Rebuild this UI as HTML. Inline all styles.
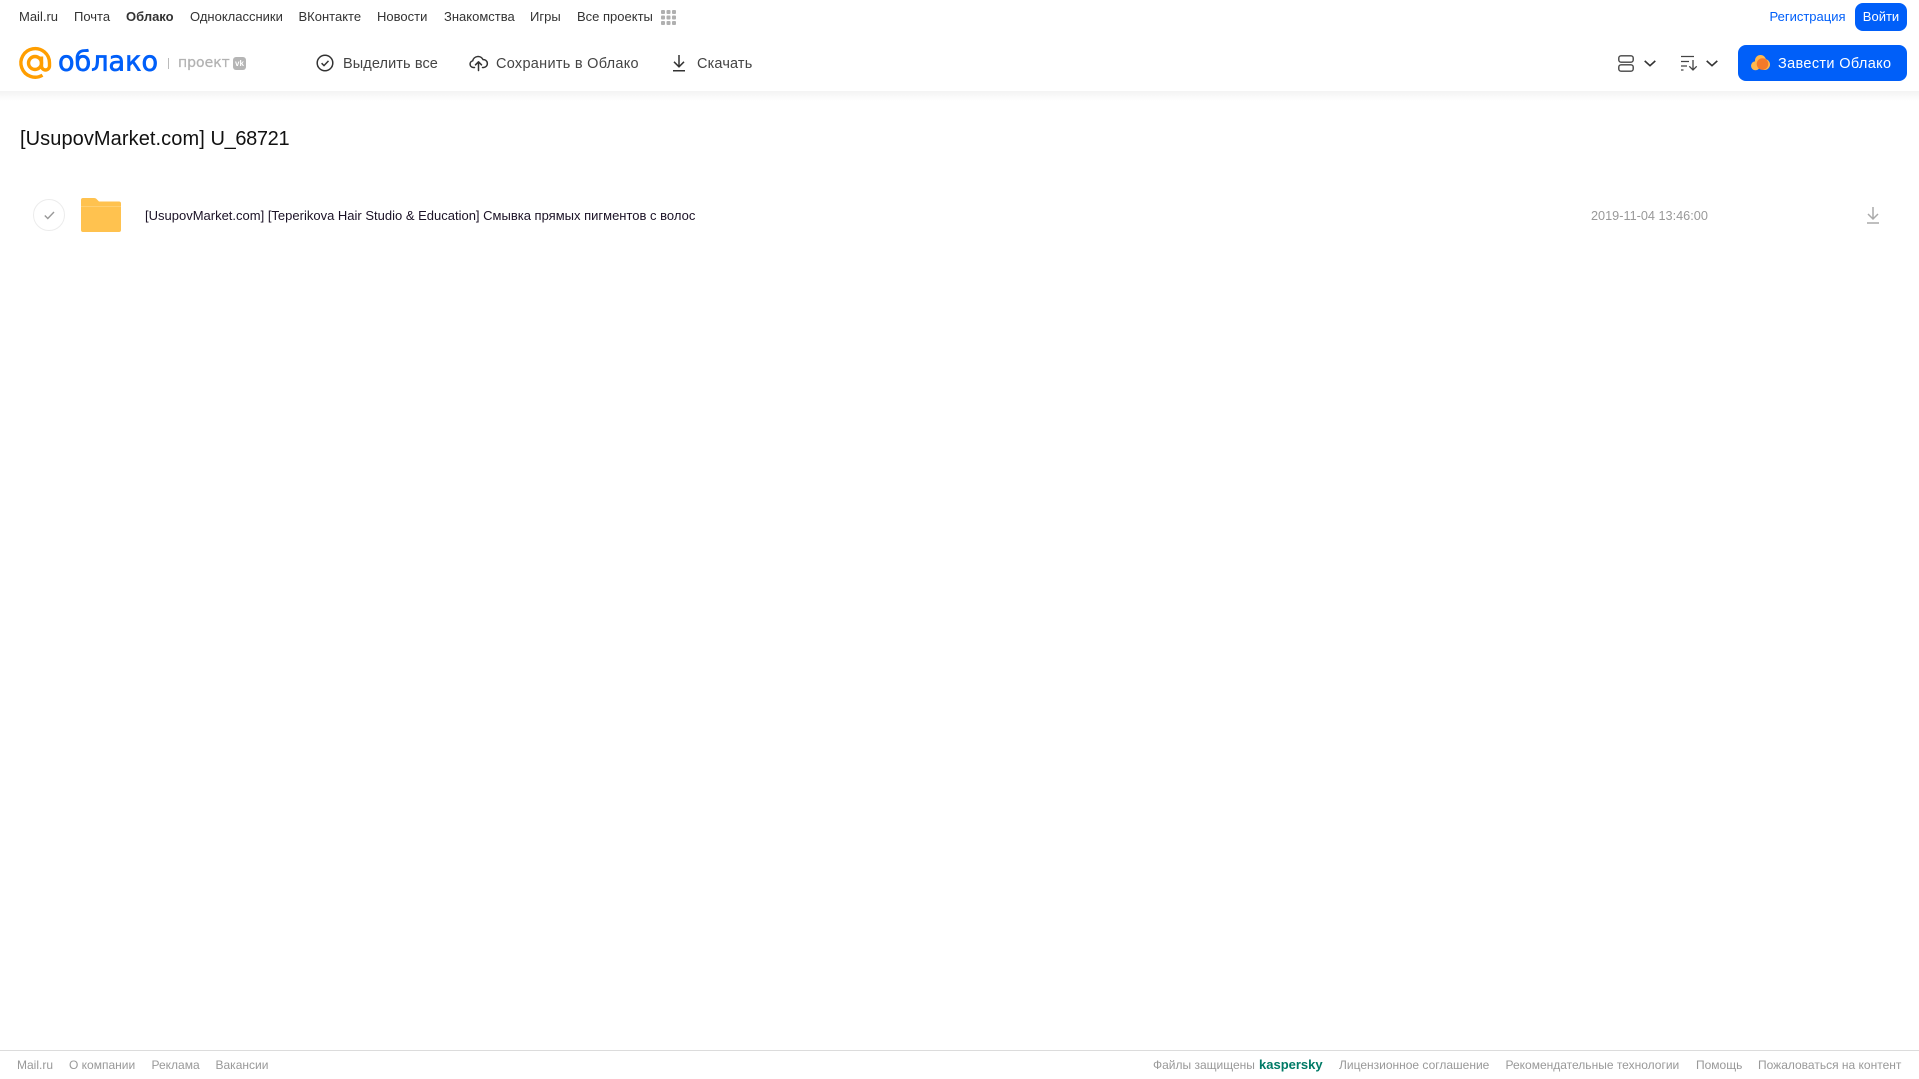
<!DOCTYPE html>
<html lang="ru"><head><meta charset="utf-8"><title>Облако</title>
<style>
html,body{margin:0;padding:0;background:#fff}
body{width:1919px;height:1079px;position:relative;overflow:hidden;font-family:"Liberation Sans",Arial,sans-serif}
.t{position:absolute;white-space:nowrap;line-height:20px}
.n{top:7px;font-size:13px;color:#333}
.b{top:53.500px;font-size:14.500px;color:#444}
.f{top:1055px;font-size:12px;color:#999}
svg{position:absolute;overflow:visible}
</style></head><body>
<div style="position:absolute;left:0;top:91px;width:1919px;height:10px;background:linear-gradient(#f3f3f3,#fff)"></div>

<span class="t n" style="left:19px">Mail.ru</span>
<span class="t n" style="left:74px">Почта</span>
<span class="t n" style="left:126px;font-weight:bold">Облако</span>
<span class="t n" style="left:190px">Одноклассники</span>
<span class="t n" style="left:298.500px">ВКонтакте</span>
<span class="t n" style="left:377px">Новости</span>
<span class="t n" style="left:444px">Знакомства</span>
<span class="t n" style="left:530px">Игры</span>
<span class="t n" style="left:577px">Все проекты</span>
<svg style="left:661px;top:10px" width="15" height="15" fill="#b0b0b0">
<rect x="0" y="0" width="4" height="4" rx="1"/><rect x="5.500" y="0" width="4" height="4" rx="1"/><rect x="11" y="0" width="4" height="4" rx="1"/>
<rect x="0" y="5.500" width="4" height="4" rx="1"/><rect x="5.500" y="5.500" width="4" height="4" rx="1"/><rect x="11" y="5.500" width="4" height="4" rx="1"/>
<rect x="0" y="11" width="4" height="4" rx="1"/><rect x="5.500" y="11" width="4" height="4" rx="1"/><rect x="11" y="11" width="4" height="4" rx="1"/></svg>

<span class="t n" style="left:1769.500px;color:#005ff9">Регистрация</span>
<div style="position:absolute;left:1855px;top:3px;width:52px;height:28px;border-radius:8px;background:#005ff9;color:#fff;font-size:13px;line-height:28px;text-align:center">Войти</div>

<svg style="left:19px;top:47px" width="33" height="33" viewBox="0 0 33 33" fill="none" stroke="#ff9e00" stroke-width="3.400"><circle cx="16" cy="16" r="6.500"/><path d="M22.500 9.500V19a4 4 0 0 0 8 0V16A14.300 14.300 0 1 0 23.500 28.200"/></svg>
<svg style="left:56px;top:42px" width="106" height="40"><text x="2" y="28.500" font-family="'DejaVu Sans',sans-serif" font-size="28" fill="#005ff9" stroke="#005ff9" stroke-width=".7" textLength="100" lengthAdjust="spacingAndGlyphs">облако</text></svg>
<div style="position:absolute;left:168px;top:58px;width:1px;height:11px;background:#bbb"></div>
<span class="t" style="left:178px;top:53px;font-family:'DejaVu Sans',sans-serif;font-size:14px;color:#b2b2b2;-webkit-text-stroke:.25px #b2b2b2">проект</span>
<div style="position:absolute;left:233px;top:57px;width:13px;height:13px;border-radius:3px;background:#b5b5b5;color:#fff;font-size:8px;font-weight:bold;line-height:13px;text-align:center">vk</div>

<svg style="left:316px;top:54px" width="18" height="18" viewBox="0 0 18 18" fill="none" stroke="#333" stroke-width="1.500"><circle cx="9" cy="9" r="7.800"/><path d="M5.600 9.200l2.400 2.400 4.500-4.700"/></svg>
<span class="t b" style="left:343px;letter-spacing:.1px">Выделить все</span>
<svg style="left:469px;top:54px" width="19" height="17" viewBox="0 0 19 17" fill="none" stroke="#333" stroke-width="1.500" stroke-linecap="round" stroke-linejoin="round"><path d="M5.500 13.500H4.200A3.400 3.400 0 0 1 3.700 6.800 5.500 5.500 0 0 1 14 5.600a3.900 3.900 0 0 1 .8 7.900H13.500"/><path d="M9.500 16.500V8M6.500 10.800l3-3 3 3"/></svg>
<span class="t b" style="left:496px;letter-spacing:.28px">Сохранить в Облако</span>
<svg style="left:672px;top:54px" width="14" height="18" viewBox="0 0 14 18" fill="none" stroke="#333" stroke-width="1.500"><path d="M7 1v11.500M2 7.800l5 5 5-5M1 16.800h12"/></svg>
<span class="t b" style="left:697px;letter-spacing:.15px">Скачать</span>

<svg style="left:1618px;top:55px" width="16" height="17" fill="none" stroke="#444" stroke-width="1.400"><rect x=".8" y=".8" width="14.400" height="6.400" rx="2.200"/><rect x=".8" y="9.800" width="14.400" height="6.400" rx="2.200"/></svg>
<svg style="left:1644px;top:60px" width="12" height="7" fill="none" stroke="#333" stroke-width="1.600"><path d="M.7.900L6 5.700 11.300.9"/></svg>
<svg style="left:1681px;top:55px" width="17" height="16" fill="none" stroke="#444" stroke-width="1.300"><path d="M0 1.500h13M0 6.500h8M0 11h6M0 15h2.500M12 5v10M8.300 11.300l3.700 3.700 3.700-3.700"/></svg>
<svg style="left:1706px;top:60px" width="12" height="7" fill="none" stroke="#333" stroke-width="1.600"><path d="M.7.900L6 5.700 11.300.9"/></svg>

<div style="position:absolute;left:1738px;top:45px;width:169px;height:36px;border-radius:8px;background:#005ff9"></div>
<svg style="left:1751px;top:55px" width="19" height="16"><circle cx="4.500" cy="10.800" r="4.500" fill="#ffb84d"/><circle cx="9.500" cy="5.500" r="5.500" fill="#ffb84d"/><circle cx="13.500" cy="9.500" r="5.500" fill="#ffb84d"/><circle cx="11.500" cy="9" r="5.800" fill="#f47a2a"/></svg>
<span class="t" style="left:1778px;top:53.500px;font-size:14.500px;color:#fff;letter-spacing:.35px">Завести Облако</span>

<span class="t" style="left:20px;top:127px;font-size:20px;line-height:24px;color:#111;letter-spacing:.08px">[UsupovMarket.com]</span>
<span class="t" style="left:210.500px;top:127px;font-size:20px;line-height:24px;color:#111;letter-spacing:-.35px">U_68721</span>

<div style="position:absolute;left:33px;top:199px;width:30px;height:30px;border:1px solid #ececec;border-radius:50%"></div>
<svg style="left:43.500px;top:211px" width="11" height="9" fill="none" stroke="#999" stroke-width="1.400"><path d="M.8 4.500l3 3L10 1"/></svg>
<svg style="left:81px;top:198px" width="40" height="34"><path d="M2 0H13q2 0 3 1.500L18 3.500H38q2 0 2 2V32q0 2-2 2H2q-2 0-2-2V2q0-2 2-2Z" fill="#ffc24f"/><path d="M0 8.500H40" stroke="#ffcf72" stroke-width="1"/></svg>
<span class="t" style="left:145px;top:205.500px;font-size:13px;color:#1b1226">[UsupovMarket.com] [Teperikova Hair Studio &amp; Education] Смывка прямых пигментов с волос</span>
<span class="t" style="left:1591px;top:205.500px;font-size:12.700px;color:#999">2019-11-04 13:46:00</span>
<svg style="left:1866px;top:206px" width="14" height="18" fill="none" stroke="#aaa" stroke-width="1.500"><path d="M7 1v11.500M2 8l5 5 5-5M1 17h12"/></svg>

<div style="position:absolute;left:0;top:1050px;width:1919px;height:1px;background:#dcdcdc"></div>
<span class="t f" style="left:17px">Mail.ru</span>
<span class="t f" style="left:69px">О компании</span>
<span class="t f" style="left:151.500px">Реклама</span>
<span class="t f" style="left:215.500px">Вакансии</span>
<span class="t f" style="left:1153px">Файлы защищены</span>
<span class="t" style="left:1259px;top:1055px;font-size:13px;font-weight:bold;color:#007a66">kaspersky</span>
<span class="t f" style="left:1339px">Лицензионное соглашение</span>
<span class="t f" style="left:1505.500px">Рекомендательные технологии</span>
<span class="t f" style="left:1696px">Помощь</span>
<span class="t f" style="left:1758px">Пожаловаться на контент</span>
</body></html>
